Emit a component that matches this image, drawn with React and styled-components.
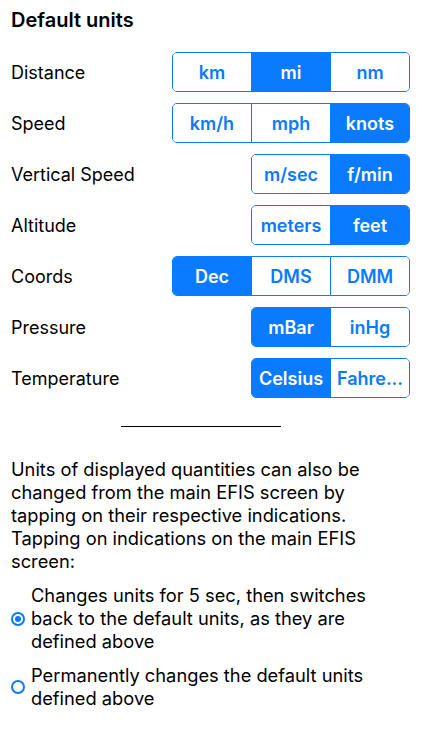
import React, { useState } from 'react';
import styled, { createGlobalStyle } from 'styled-components';

const Global = createGlobalStyle`
  body {
    margin: 0;
    background: #fff;
    font-family: Inter, "Liberation Sans", Arial, sans-serif;
    color: #000;
  }
`;

const BLUE = '#0a7aff';

const Page = styled.div`
  padding: 8px 12px 20px 11px;
`;

const Title = styled.h1`
  margin: 0;
  font-size: 20px;
  line-height: 24px;
  font-weight: 600;
`;

const Rows = styled.div`
  display: flex;
  flex-direction: column;
  gap: 11px;
  margin-top: 20px;
`;

const Row = styled.div`
  display: flex;
  align-items: center;
  justify-content: space-between;
  height: 40px;
`;

const Label = styled.span`
  font-size: 18px;
`;

const Segmented = styled.div`
  display: flex;
  border: 1px solid ${BLUE};
  border-radius: 5px;
  overflow: hidden;
  height: 38px;
`;

const Segment = styled.button`
  width: ${p => p.$w}px;
  border: none;
  border-left: ${p => (p.$first ? 'none' : `1px solid ${BLUE}`)};
  background: ${p => (p.$on ? BLUE : '#fff')};
  color: ${p => (p.$on ? '#fff' : BLUE)};
  font-family: Inter, "Liberation Sans", Arial, sans-serif;
  font-size: 18px;
  font-weight: 600;
  padding: 0;
  white-space: nowrap;
  overflow: hidden;
  cursor: pointer;
`;

const Divider = styled.hr`
  width: 160px;
  margin: 28px 0 0 110px;
  border: none;
  border-top: 1px solid #000;
`;

const Para = styled.p`
  margin: 31px 0 0;
  padding-right: 12px;
  font-size: 18.3px;
  line-height: 23px;
`;

const Options = styled.div`
  display: flex;
  flex-direction: column;
  gap: 11px;
  margin-top: 11px;
  padding-right: 12px;
`;

const Option = styled.label`
  display: flex;
  align-items: center;
  gap: 6px;
  font-size: 18.3px;
  line-height: 23px;
  cursor: pointer;
`;

const Radio = styled.span`
  flex: none;
  box-sizing: border-box;
  width: 14px;
  height: 14px;
  border: 2px solid ${BLUE};
  border-radius: 50%;
  display: flex;
  align-items: center;
  justify-content: center;
  &::after {
    content: '';
    width: 6px;
    height: 6px;
    border-radius: 50%;
    background: ${p => (p.$on ? BLUE : 'transparent')};
  }
`;

const units = [
  { label: 'Distance', opts: ['km', 'mi', 'nm'], sel: 1 },
  { label: 'Speed', opts: ['km/h', 'mph', 'knots'], sel: 2 },
  { label: 'Vertical Speed', opts: ['m/sec', 'f/min'], sel: 1 },
  { label: 'Altitude', opts: ['meters', 'feet'], sel: 1 },
  { label: 'Coords', opts: ['Dec', 'DMS', 'DMM'], sel: 0 },
  { label: 'Pressure', opts: ['mBar', 'inHg'], sel: 0 },
  { label: 'Temperature', opts: ['Celsius', 'Fahre...'], sel: 0 },
];

function UnitRow({ label, opts, sel }) {
  const [on, setOn] = useState(sel);
  return (
    <Row>
      <Label>{label}</Label>
      <Segmented>
        {opts.map((o, i) => (
          <Segment key={o} $w={i === 0 ? 78 : 79} $first={i === 0} $on={on === i} onClick={() => setOn(i)}>
            {o}
          </Segment>
        ))}
      </Segmented>
    </Row>
  );
}

export default function App() {
  const [mode, setMode] = useState(0);
  return (
    <Page>
      <Global />
      <Title>Default units</Title>
      <Rows>
        {units.map(u => <UnitRow key={u.label} {...u} />)}
      </Rows>
      <Divider />
      <Para>
        Units of displayed quantities can also be changed from the main EFIS screen by tapping on their respective indications. Tapping on indications on the main EFIS screen:
      </Para>
      <Options>
        <Option onClick={() => setMode(0)}>
          <Radio $on={mode === 0} />
          <span>Changes units for 5 sec, then switches back to the default units, as they are defined above</span>
        </Option>
        <Option onClick={() => setMode(1)}>
          <Radio $on={mode === 1} />
          <span>Permanently changes the default units defined above</span>
        </Option>
      </Options>
    </Page>
  );
}
